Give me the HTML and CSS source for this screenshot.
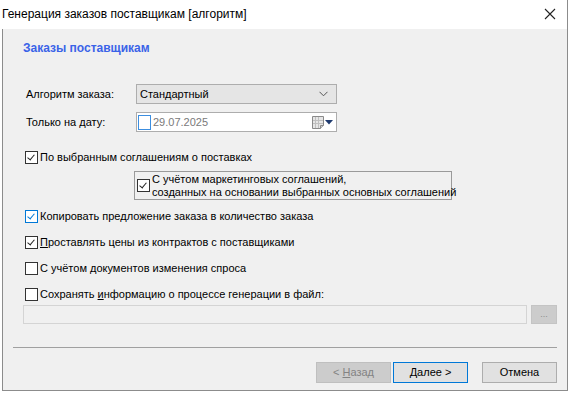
FILE: index.html
```html
<!DOCTYPE html>
<html lang="ru">
<head>
    <meta charset="UTF-8">
    <title>Генерация заказов поставщикам [алгоритм]</title>
    <link rel="stylesheet" href="styles.css">
</head>
<body>
    <div class="window">
        <div class="titlebar">
            <span class="title">Генерация заказов поставщикам [алгоритм]</span>
            <svg class="close" width="12" height="12" viewBox="0 0 12 12">
                <path d="M1 1 L11 11 M11 1 L1 11" stroke="#222" stroke-width="1.1" fill="none"/>
            </svg>
        </div>
        <div class="content">
            <h2 class="page-title">Заказы поставщикам</h2>

            <div class="field-row algo">
                <label class="field-label">Алгоритм заказа:</label>
                <div class="combo">
                    <span>Стандартный</span>
                    <svg width="9" height="6" viewBox="0 0 9 6">
                        <path d="M0.5 0.8 L4.5 4.8 L8.5 0.8" stroke="#555" stroke-width="1" fill="none"/>
                    </svg>
                </div>
            </div>

            <div class="field-row date">
                <label class="field-label">Только на дату:</label>
                <div class="datebox">
                    <span class="date-check"></span>
                    <span class="date-text">29.07.2025</span>
                    <svg class="cal" width="12" height="13" viewBox="0 0 12 13">
                        <path d="M0.5 0.5 H11.5 V9.5 L8.5 12.5 H0.5 Z" fill="#e6e6e6" stroke="#8a8a8a"/>
                        <path d="M3.5 1 V12 M6.5 1 V12 M1 4.5 H11 M1 7.5 H11" stroke="#c0c0c0" stroke-width="1"/>
                        <path d="M8.5 12.5 V9.5 H11.5" fill="#cfcfcf" stroke="#8a8a8a"/>
                    </svg>
                    <svg width="8" height="5" viewBox="0 0 8 5">
                        <path d="M0 0 H8 L4 4.5 Z" fill="#1e3a6e"/>
                    </svg>
                </div>
            </div>

            <label class="check first">
                <span class="box checked"></span>
                <span>По выбранным соглашениям о поставках</span>
            </label>

            <div class="group">
                <span class="box checked"></span>
                <span class="group-text">С учётом маркетинговых соглашений,<br>созданных на основании выбранных основных соглашений</span>
            </div>

            <label class="check after-group">
                <span class="box checked hover"></span>
                <span>Копировать предложение заказа в количество заказа</span>
            </label>
            <label class="check">
                <span class="box checked"></span>
                <span><u>П</u>роставлять цены из контрактов с поставщиками</span>
            </label>
            <label class="check">
                <span class="box"></span>
                <span>С учётом документов изменения спроса</span>
            </label>
            <label class="check">
                <span class="box"></span>
                <span>Сохранять <u>и</u>нформацию о процессе генерации в файл:</span>
            </label>

            <div class="file-row">
                <div class="file-input"></div>
                <div class="browse">...</div>
            </div>

            <div class="separator"></div>

            <div class="buttons">
                <div class="btn disabled">&lt; <u>Н</u>азад</div>
                <div class="btn default"><u>Д</u>алее &gt;</div>
                <div class="btn cancel">Отмена</div>
            </div>
        </div>
    </div>
</body>
</html>
```

FILE: styles.css
```css
body {
    margin: 0;
    background-color: #fff;
    font-family: "Liberation Sans", Arial, sans-serif;
    font-size: 11px;
    color: #000;
}
.window {
    width: 566px;
    height: 391px;
    margin-left: 2px;
    border: 1px solid #8c8c8c;
    border-top: none;
    background-color: #f0f0f0;
    box-sizing: border-box;
}
.titlebar {
    height: 29px;
    background-color: #fff;
    display: flex;
    align-items: center;
    justify-content: space-between;
    padding: 0 11px 0 2px;
    margin-left: -3px;
}
.title {
    font-size: 12px;
    margin-top: -2px;
}
.close {
    margin-top: -1px;
}
.content {
    padding: 0 10px 0 10px;
    display: flex;
    flex-direction: column;
}
.page-title {
    margin: 11px 0 0 10px;
    font-size: 12px;
    font-weight: bold;
    color: #3a63e8;
    height: 16px;
    line-height: 16px;
}
.field-row {
    display: flex;
    align-items: center;
    margin-left: 13px;
}
.field-row.algo {
    margin-top: 28px;
}
.field-row.date {
    margin-top: 8px;
}
.field-label {
    width: 110px;
}
.combo {
    width: 201px;
    height: 20px;
    box-sizing: border-box;
    border: 1px solid #adadad;
    background-color: #e5e5e5;
    display: flex;
    align-items: center;
    justify-content: space-between;
    padding: 0 8px 0 3px;
}
.datebox {
    width: 201px;
    height: 20px;
    box-sizing: border-box;
    border: 1px solid #adadad;
    background-color: #fff;
    display: flex;
    align-items: center;
    padding: 0 3px 0 1px;
}
.date-check {
    width: 13px;
    height: 15px;
    box-sizing: border-box;
    border: 1px solid #3c8ee0;
    background-color: #fff;
    margin-right: 2px;
}
.date-text {
    color: #7a7a7a;
    flex: 1;
}
.cal {
    margin-right: 1px;
}
.check {
    display: flex;
    align-items: center;
    margin-left: 12px;
    height: 16px;
    margin-top: 10px;
}
.check.first {
    margin-top: 17px;
}
.check.after-group {
    margin-top: 8px;
}
.box {
    width: 13px;
    height: 13px;
    box-sizing: border-box;
    border: 1px solid #333;
    background-color: #fff;
    margin-right: 2px;
    flex-shrink: 0;
    position: relative;
}
.box.checked::after {
    content: "";
    position: absolute;
    left: 3px;
    top: 1px;
    width: 3px;
    height: 6px;
    border-right: 1px solid #222;
    border-bottom: 1px solid #222;
    transform: rotate(40deg);
}
.box.hover {
    border-color: #0078d7;
}
.box.hover::after {
    border-color: #0078d7;
}
.group {
    display: flex;
    align-items: center;
    margin: 6px 0 0 121px;
    width: 318px;
    height: 29px;
    box-sizing: border-box;
    border: 1px solid #9a9a9a;
    padding-left: 2px;
}
.group-text {
    line-height: 13px;
    white-space: nowrap;
}
.file-row {
    display: flex;
    margin: 3px 0 0 10px;
    gap: 4px;
}
.file-input {
    width: 504px;
    height: 19px;
    box-sizing: border-box;
    border: 1px solid #d4d4d4;
    background-color: #f0f0f0;
}
.browse {
    width: 26px;
    height: 19px;
    box-sizing: border-box;
    border: 1px solid #c4c4c4;
    background-color: #cccccc;
    color: #8d8d8d;
    font-size: 9px;
    text-align: center;
    line-height: 17px;
}
.separator {
    height: 0;
    border-top: 1px solid #a0a0a0;
    margin: 23px 0 0 0;
}
.buttons {
    display: flex;
    justify-content: flex-end;
    margin-top: 14px;
}
.btn {
    width: 75px;
    height: 21px;
    box-sizing: border-box;
    border: 1px solid #adadad;
    background-color: #e1e1e1;
    text-align: center;
    line-height: 19px;
}
.btn.disabled {
    background-color: #cccccc;
    border-color: #bfbfbf;
    color: #838383;
}
.btn.default {
    border-color: #0078d7;
    margin-left: 2px;
}
.btn.cancel {
    margin-left: 14px;
}
```
